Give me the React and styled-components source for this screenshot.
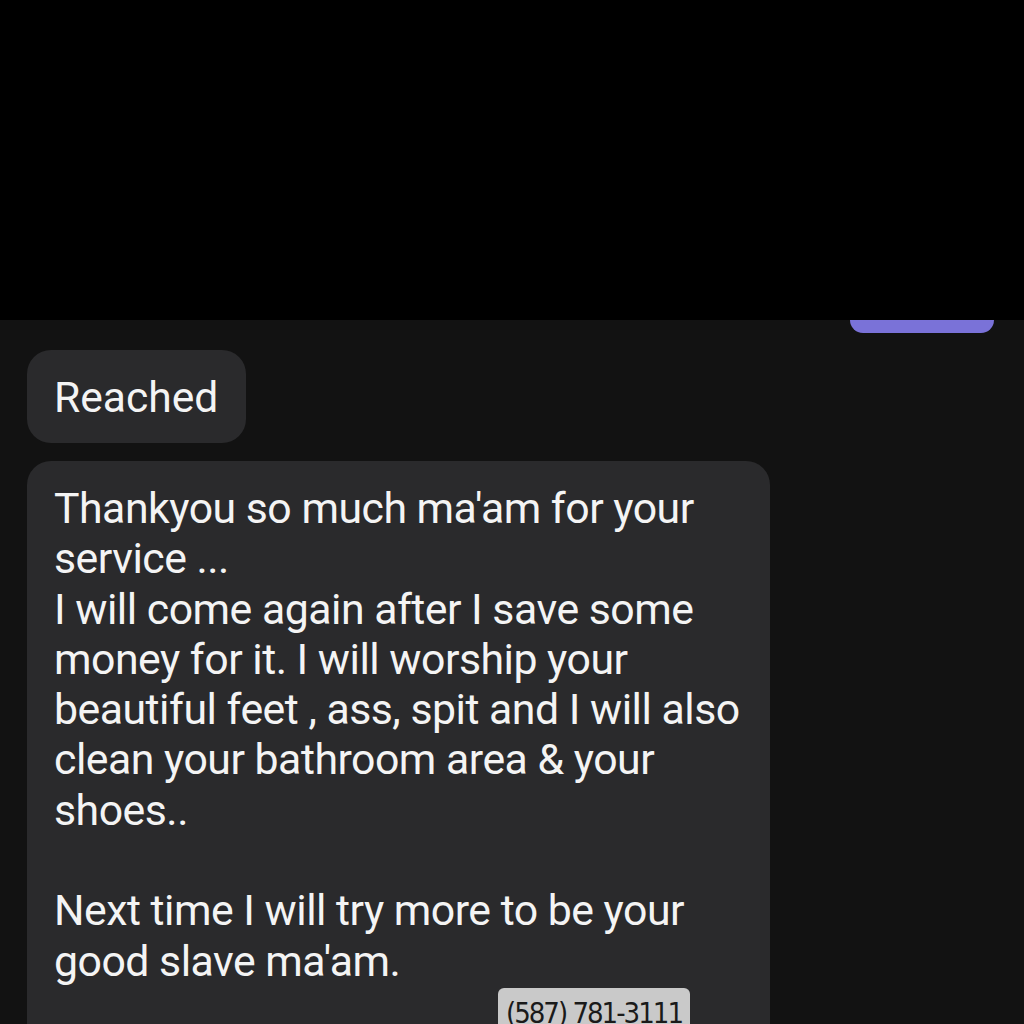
import React from "react";
import styled, { createGlobalStyle } from "styled-components";

const Global = createGlobalStyle`
  html, body { margin: 0; padding: 0; background: #121212; }
  body { width: 1024px; height: 1024px; overflow: hidden; font-family: Roboto, "Noto Sans", sans-serif; }
`;

const Screen = styled.div`
  width: 1024px;
  height: 1024px;
  display: flex;
  flex-direction: column;
  background: #121212;
  overflow: hidden;
`;

const TopBar = styled.div`
  height: 320px;
  flex: none;
  background: #000;
`;

const Thread = styled.div`
  display: flex;
  flex-direction: column;
  align-items: flex-start;
  gap: 17px;
  padding: 0 27px;
`;

const SentTail = styled.div`
  align-self: flex-end;
  width: 144px;
  height: 13px;
  margin-right: 3px;
  background: #7a72d8;
  border-radius: 0 0 22px 22px;
`;

const Bubble = styled.div`
  position: relative;
  background: #2a2a2c;
  color: #f4f4f4;
  border-radius: 24px;
  font-family: Roboto, "Noto Sans", sans-serif;
`;

const ShortBubble = styled(Bubble)`
  height: 93px;
  display: flex;
  align-items: center;
  padding: 0 28px 0 27px;
  font-size: 42.6px;
  letter-spacing: 0px;
  box-sizing: border-box;
`;

const LongBubble = styled(Bubble)`
  width: 743px;
  box-sizing: border-box;
  padding: 22px 27px 80px;
  font-size: 42.8px;
  letter-spacing: -0.5px;
  line-height: 50.3px;
  margin-top: 1px;
`;

const Line = styled.div`
  white-space: nowrap;
`;

const Blank = styled.div`
  height: 50.3px;
`;

const PhoneTag = styled.div`
  position: absolute;
  left: 471px;
  top: 527px;
  width: 192px;
  height: 50px;
  background: #c9c9c9;
  border-radius: 6px;
  color: #1a1a1a;
  font-family: "DejaVu Sans Condensed", "Liberation Sans Narrow", Roboto, sans-serif;
  font-size: 29px;
  letter-spacing: -2px;
  line-height: 50px;
  text-align: center;
`;

const lines = [
  "Thankyou so much ma'am for your",
  "service ...",
  "I will come again after I save some",
  "money for it. I will worship your",
  "beautiful feet , ass, spit and I will also",
  "clean your bathroom area & your",
  "shoes..",
  null,
  "Next time I will try more to be your",
  "good slave ma'am.",
];

export default function App() {
  return (
    <>
      <Global />
      <Screen>
        <TopBar />
        <Thread>
          <SentTail />
          <ShortBubble>Reached</ShortBubble>
          <LongBubble>
            {lines.map((l, i) => (l === null ? <Blank key={i} /> : <Line key={i}>{l}</Line>))}
            <PhoneTag>(587) 781-3111</PhoneTag>
          </LongBubble>
        </Thread>
      </Screen>
    </>
  );
}
